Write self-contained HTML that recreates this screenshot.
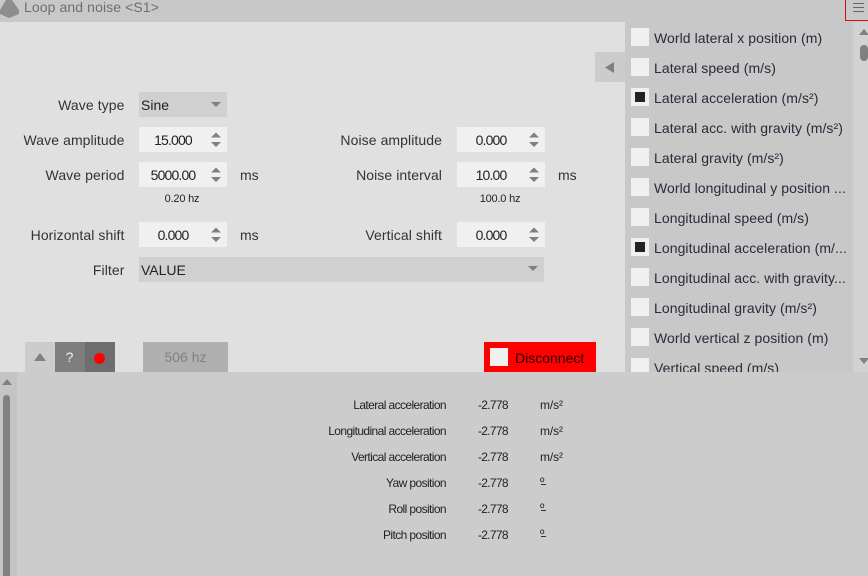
<!DOCTYPE html>
<html><head><meta charset="utf-8"><style>
html,body{margin:0;padding:0}
body{width:868px;height:576px;overflow:hidden;position:relative;background:#e0e0e0;font-family:"Liberation Sans",sans-serif;font-size:14px;color:#333}
div{position:absolute;white-space:nowrap;box-sizing:border-box}
svg{position:absolute;overflow:visible}
.l{text-align:right;line-height:25px;height:25px;letter-spacing:.08px}
.b{background:#f0f0f0;height:25px;width:88px;line-height:27px;color:#222}
.b span{position:absolute;left:0;width:68px;text-align:center;top:0;letter-spacing:-.85px}
.d{background:#d0d0d0;height:25px;line-height:27px;color:#222;padding-left:2px}
.u{line-height:25px;height:25px}
.hz{font-size:11px;line-height:14px;color:#222;letter-spacing:-.2px}
.c{left:631px;width:18px;height:18px;background:#f0f0f0}
.t{left:654px;height:18px;line-height:18px;font-size:14px;color:#2a2a3a;letter-spacing:.07px}
.r{font-size:12px;line-height:14px;color:#222;letter-spacing:-.6px}
.v{font-size:12px;line-height:14px;color:#222;letter-spacing:-.7px}
.m{font-size:12px;line-height:14px;color:#222;letter-spacing:-.1px}
.o{left:541px;width:5px;height:1px;background:#333}
</style></head><body>
<div style="left:0;top:0;width:868px;height:22px;background:#c8c8c8"></div>
<svg style="left:0;top:0" width="20" height="20"><path d="M6 0L12 0L19 10L19 14L9 18L0 14L0 10Z" fill="#8e8e8e"/></svg>
<div style="left:24px;top:-1px;height:16px;line-height:16px;font-size:14px;color:#6f6f6f;letter-spacing:.1px">Loop and noise &lt;S1&gt;</div>
<div style="left:845px;top:-1px;width:23px;height:22px;border:1px solid #d01010;border-right:0"></div>
<svg style="left:853px;top:3px" width="12" height="10"><path d="M0 .5H11M0 4.5H11M0 8.5H11" stroke="#666" stroke-width="1"/></svg>

<div class="l" style="left:0;top:93px;width:124.5px">Wave type</div>
<div class="d" style="left:139px;top:92px;width:88px">Sine</div>
<svg style="left:210px;top:101px" width="12" height="8"><path d="M1 1H11L6 6Z" fill="#808080"/></svg>

<div class="l" style="left:0;top:128px;width:124.5px">Wave amplitude</div>
<div class="b" style="left:139px;top:127px"><span>15.000</span></div>
<div class="l" style="left:0;top:163px;width:124.5px">Wave period</div>
<div class="b" style="left:139px;top:162px"><span>5000.00</span></div>
<div class="u" style="left:240px;top:163px">ms</div>
<div class="hz" style="left:138px;top:192px;width:88px;text-align:center">0.20 hz</div>
<div class="l" style="left:0;top:223px;width:124.5px">Horizontal shift</div>
<div class="b" style="left:139px;top:222px"><span>0.000</span></div>
<div class="u" style="left:240px;top:223px">ms</div>
<div class="l" style="left:0;top:258px;width:124.5px">Filter</div>
<div class="d" style="left:139px;top:257px;width:405px">VALUE</div>
<svg style="left:527px;top:265px" width="12" height="8"><path d="M1 1H11L6 6Z" fill="#808080"/></svg>

<div class="l" style="left:300px;top:128px;width:142px">Noise amplitude</div>
<div class="b" style="left:457px;top:127px"><span>0.000</span></div>
<div class="l" style="left:300px;top:163px;width:142px">Noise interval</div>
<div class="b" style="left:457px;top:162px"><span>10.00</span></div>
<div class="u" style="left:558px;top:163px">ms</div>
<div class="hz" style="left:456px;top:192px;width:88px;text-align:center">100.0 hz</div>
<div class="l" style="left:300px;top:223px;width:142px">Vertical shift</div>
<div class="b" style="left:457px;top:222px"><span>0.000</span></div>

<svg style="left:0;top:0" width="868" height="576" fill="#808080">
<path d="M211 137.5L216 132.5L221 137.5ZM211 142H221L216 147Z"/>
<path d="M211 172.5L216 167.5L221 172.5ZM211 177H221L216 182Z"/>
<path d="M211 232.5L216 227.5L221 232.5ZM211 237H221L216 242Z"/>
<path d="M529 137.5L534 132.5L539 137.5ZM529 142H539L534 147Z"/>
<path d="M529 172.5L534 167.5L539 172.5ZM529 177H539L534 182Z"/>
<path d="M529 232.5L534 227.5L539 232.5ZM529 237H539L534 242Z"/>
</svg>

<div style="left:25px;top:342px;width:30px;height:31px;background:#cccccc"></div>
<svg style="left:34px;top:352px" width="12" height="10"><path d="M0 9L6 1L12 9Z" fill="#808080"/></svg>
<div style="left:55px;top:342px;width:30px;height:31px;color:#f0f0f0;text-align:center;line-height:31px;font-size:14px;background:#7e7e7e;padding-right:1px">?</div>
<div style="left:85px;top:342px;width:30px;height:31px;background:#6e6e6e"></div>
<div style="left:94px;top:353px;width:11px;height:11px;border-radius:50%;background:#ff0000"></div>
<div style="left:143px;top:342px;width:85px;height:31px;background:#b0b0b0;color:#808080;text-align:center;line-height:31px;font-size:14px">506 hz</div>
<div style="left:484px;top:342px;width:112px;height:31px;background:#ff0000"></div>
<div style="left:490px;top:348px;width:18px;height:18px;background:#f0f0f0"></div>
<div style="left:515px;top:349px;height:18px;line-height:18px;color:#200000">Disconnect</div>

<div style="left:595px;top:52px;width:30px;height:30px;background:#cccccc"></div>
<svg style="left:605px;top:62px" width="10" height="12"><path d="M9 0V11L0 5.5Z" fill="#808080"/></svg>

<div style="left:625px;top:22px;width:228px;height:351px;background:#c8c8c8;overflow:hidden"></div>
<div style="left:853px;top:22px;width:15px;height:351px;background:#d2d2d2"></div>
<svg style="left:859px;top:28px" width="10" height="8"><path d="M0 7L5 1L10 7Z" fill="#808080"/></svg>
<div style="left:860px;top:45px;width:8px;height:16px;border-radius:4px;background:#808080"></div>
<svg style="left:859px;top:358px" width="10" height="8"><path d="M0 0H10L5 6Z" fill="#808080"/></svg>

<div class="c" style="top:28px"></div><div class="t" style="top:29px">World lateral x position (m)</div>
<div class="c" style="top:58px"></div><div class="t" style="top:59px">Lateral speed (m/s)</div>
<div class="c" style="top:88px"></div><div style="left:635px;top:92px;width:10px;height:10px;background:#222"></div><div class="t" style="top:89px">Lateral acceleration (m/s²)</div>
<div class="c" style="top:118px"></div><div class="t" style="top:119px">Lateral acc. with gravity (m/s²)</div>
<div class="c" style="top:148px"></div><div class="t" style="top:149px">Lateral gravity (m/s²)</div>
<div class="c" style="top:178px"></div><div class="t" style="top:179px">World longitudinal y position ...</div>
<div class="c" style="top:208px"></div><div class="t" style="top:209px">Longitudinal speed (m/s)</div>
<div class="c" style="top:238px"></div><div style="left:635px;top:242px;width:10px;height:10px;background:#222"></div><div class="t" style="top:239px">Longitudinal acceleration (m/...</div>
<div class="c" style="top:268px"></div><div class="t" style="top:269px">Longitudinal acc. with gravity...</div>
<div class="c" style="top:298px"></div><div class="t" style="top:299px">Longitudinal gravity (m/s²)</div>
<div class="c" style="top:328px"></div><div class="t" style="top:329px">World vertical z position (m)</div>
<div class="c" style="top:358px"></div><div class="t" style="top:359px">Vertical speed (m/s)</div>

<div style="left:0;top:372px;width:868px;height:204px;background:#cccccc"></div>
<div style="left:0;top:372px;width:17px;height:204px;background:#c4c4c4"></div>
<svg style="left:2px;top:378px" width="10" height="8"><path d="M0 7L5 1L10 7Z" fill="#808080"/></svg>
<div style="left:3px;top:395px;width:7px;height:181px;border-radius:4px 4px 0 0;background:#808080"></div>

<div class="r" style="left:300px;top:398px;width:146px;text-align:right">Lateral acceleration</div><div class="v" style="left:478px;top:398px">-2.778</div><div class="m" style="left:540px;top:398px">m/s²</div>
<div class="r" style="left:300px;top:424px;width:146px;text-align:right">Longitudinal acceleration</div><div class="v" style="left:478px;top:424px">-2.778</div><div class="m" style="left:540px;top:424px">m/s²</div>
<div class="r" style="left:300px;top:450px;width:146px;text-align:right">Vertical acceleration</div><div class="v" style="left:478px;top:450px">-2.778</div><div class="m" style="left:540px;top:450px">m/s²</div>
<div class="r" style="left:300px;top:476px;width:146px;text-align:right">Yaw position</div><div class="v" style="left:478px;top:476px">-2.778</div><div class="m" style="left:540px;top:475px">º</div><div class="o" style="top:484px"></div>
<div class="r" style="left:300px;top:502px;width:146px;text-align:right">Roll position</div><div class="v" style="left:478px;top:502px">-2.778</div><div class="m" style="left:540px;top:501px">º</div><div class="o" style="top:510px"></div>
<div class="r" style="left:300px;top:528px;width:146px;text-align:right">Pitch position</div><div class="v" style="left:478px;top:528px">-2.778</div><div class="m" style="left:540px;top:527px">º</div><div class="o" style="top:536px"></div>
</body></html>
